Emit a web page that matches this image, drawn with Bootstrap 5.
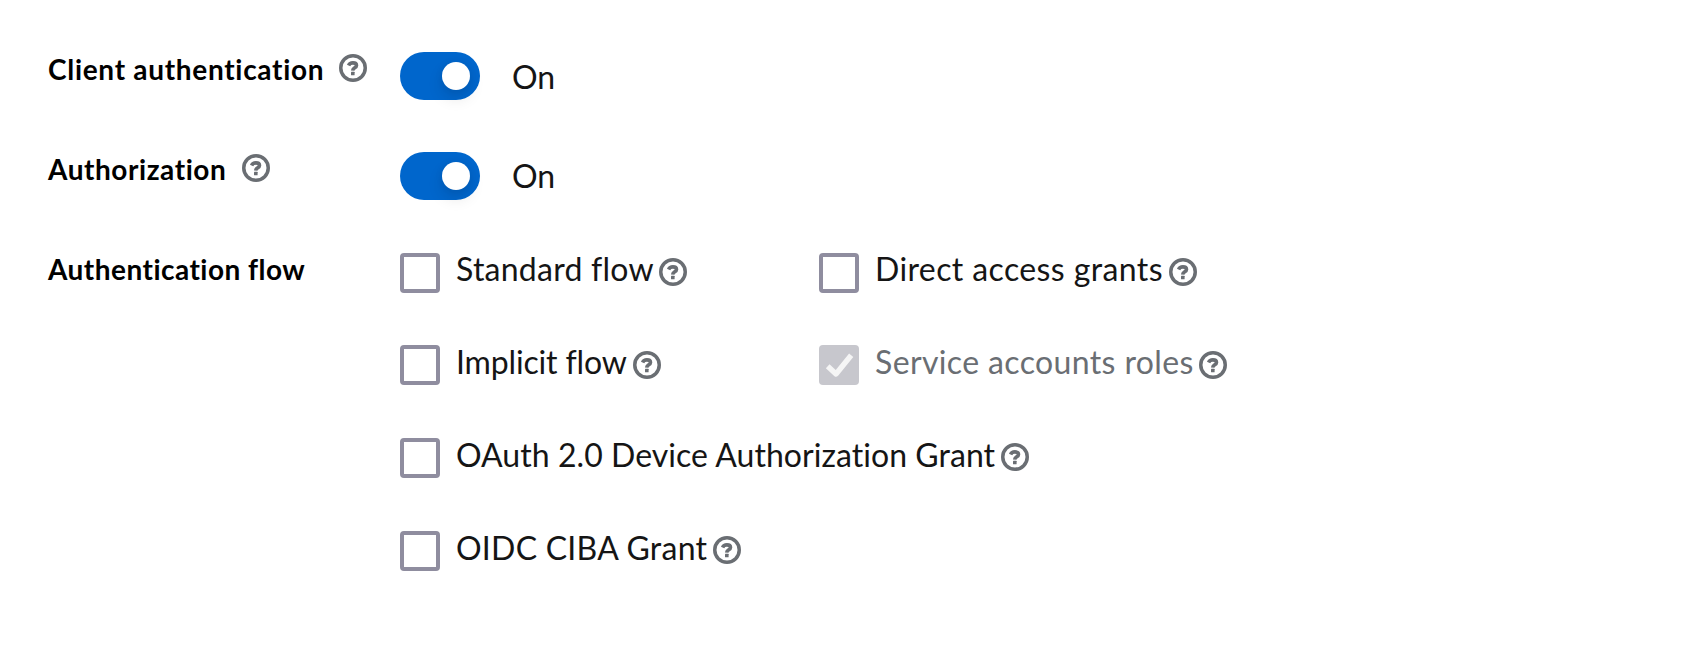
<!DOCTYPE html>
<html lang="en">
<head>
<meta charset="utf-8">
<meta name="viewport" content="width=device-width, initial-scale=1">
<title>Capability config</title>
<link href="https://cdn.jsdelivr.net/npm/bootstrap@5.3.0/dist/css/bootstrap.min.css" rel="stylesheet">
<style>
  body { font-family: Lato, "Open Sans", sans-serif; font-size: 32px; line-height: 48px; color: #151515; background: #fff; font-variant-ligatures: none; }
  .capability-form { padding: 47px 48px 0; }
  .form-line { height: 100px; }
  .line-label { width: 352px; font-size: 28px; line-height: 42px; font-weight: 700; color: #000; }
  .line-label span { padding-top: 1px; display: block; }
  .help { width: 28px; height: 28px; color: #6a6e73; flex: none; display: block; }
  .line-label .help { margin-top: 7px; }
  .form-check-label + .help { margin-top: 14px; }
  .toggle { margin-top: 5px; }
  .toggle .form-check-input { width: 80px; height: 48px; margin: 0; border: 0; border-radius: 24px; background: #06c; box-shadow: none; }
  .knob { position: absolute; left: 42px; top: 10px; width: 28px; height: 28px; border-radius: 50%; background: #fff; box-shadow: 0 8px 16px rgba(3,3,3,.12), 0 0 8px rgba(3,3,3,.06); pointer-events: none; }
  .toggle-text { margin-left: 32px; padding-top: 1px; line-height: 46px; }
  .form-line:first-child .toggle-text { padding-top: 2px; }
  .flows { margin-top: -3px; row-gap: 45px; }
  .flow-option { height: 48px; }
  .flow-option .form-check-label { padding-top: 1px; }
  .col-first { width: 419px; }
  .flow-option .form-check-input { width: 40px; height: 40px; margin: 8px 16px 0 0; float: none; border: 4px solid #8f8d9f; border-radius: 4px; flex: none; }
  .top-line .form-check-input { margin-top: 9px; }
  .flow-option.wide .help { margin-top: 13px; }
  .flow-option .form-check-input:disabled { border: 0; background: #c7c7cd; opacity: 1; }
  .flow-option .form-check-input:disabled ~ .form-check-label { opacity: 1; color: #6a6e73; }
  .tick { position: absolute; left: 0; top: 8px; width: 40px; height: 40px; pointer-events: none; }
  .t-client { width: 291px; letter-spacing: .7px; }
  .t-authz { width: 194px; letter-spacing: .56px; }
  .t-flow { letter-spacing: .47px; }
  .t-standard { width: 203px; letter-spacing: .24px; }
  .t-implicit { width: 177px; letter-spacing: -.15px; }
  .t-direct { width: 294px; letter-spacing: .39px; }
  .t-service { width: 324px; letter-spacing: .37px; }
  .t-device { width: 545px; letter-spacing: .05px; }
  .t-ciba { width: 257px; letter-spacing: .25px; }
</style>
</head>
<body>
<svg class="d-none">
  <symbol id="help" viewBox="0 0 28 28">
    <circle cx="14" cy="14" r="12.25" fill="none" stroke="currentColor" stroke-width="3.5"/>
    <path d="M9.6 11.4C10.4 9.6 12 8.9 13.9 8.9c2.2 0 3.6 1 3.6 2.6 0 2.4-3.7 2.3-3.8 5.1" fill="none" stroke="currentColor" stroke-width="3.6"/>
    <rect x="12" y="17.8" width="3.6" height="3.4" rx=".5" fill="currentColor"/>
  </symbol>
</svg>
<form class="capability-form">
  <div class="form-line d-flex">
    <div class="line-label d-flex text-nowrap"><span class="t-client">Client authentication</span><svg class="help"><use href="#help"/></svg></div>
    <div class="toggle d-flex position-relative">
      <input class="form-check-input" type="checkbox" role="switch" id="client"><span class="knob"></span>
      <label class="toggle-text" for="client">On</label>
    </div>
  </div>
  <div class="form-line d-flex">
    <div class="line-label d-flex text-nowrap"><span class="t-authz">Authorization</span><svg class="help"><use href="#help"/></svg></div>
    <div class="toggle d-flex position-relative">
      <input class="form-check-input" type="checkbox" role="switch" id="authz"><span class="knob"></span>
      <label class="toggle-text" for="authz">On</label>
    </div>
  </div>
  <div class="d-flex">
    <div class="line-label text-nowrap"><span class="t-flow">Authentication flow</span></div>
    <div class="flows d-flex flex-column text-nowrap">
      <div class="top-line d-flex">
        <div class="flow-option col-first d-flex"><input class="form-check-input" type="checkbox" id="standard"><label class="form-check-label t-standard" for="standard">Standard flow</label><svg class="help"><use href="#help"/></svg></div>
        <div class="flow-option d-flex"><input class="form-check-input" type="checkbox" id="direct"><label class="form-check-label t-direct" for="direct">Direct access grants</label><svg class="help"><use href="#help"/></svg></div>
      </div>
      <div class="d-flex">
        <div class="flow-option col-first d-flex"><input class="form-check-input" type="checkbox" id="implicit"><label class="form-check-label t-implicit" for="implicit">Implicit flow</label><svg class="help"><use href="#help"/></svg></div>
        <div class="flow-option d-flex position-relative"><input class="form-check-input" type="checkbox" id="service" disabled><svg class="tick" viewBox="0 0 40 40"><path d="M8.7 21.3 17 29 32.2 10.3" fill="none" stroke="#f5f5f5" stroke-width="5.4" stroke-linejoin="round"/></svg><label class="form-check-label t-service" for="service">Service accounts roles</label><svg class="help"><use href="#help"/></svg></div>
      </div>
      <div class="flow-option wide d-flex"><input class="form-check-input" type="checkbox" id="device"><label class="form-check-label t-device" for="device">OAuth 2.0 Device Authorization Grant</label><svg class="help"><use href="#help"/></svg></div>
      <div class="flow-option wide d-flex"><input class="form-check-input" type="checkbox" id="ciba"><label class="form-check-label t-ciba" for="ciba">OIDC CIBA Grant</label><svg class="help"><use href="#help"/></svg></div>
    </div>
  </div>
</form>
<script src="https://cdn.jsdelivr.net/npm/bootstrap@5.3.0/dist/js/bootstrap.bundle.min.js"></script>
</body>
</html>
